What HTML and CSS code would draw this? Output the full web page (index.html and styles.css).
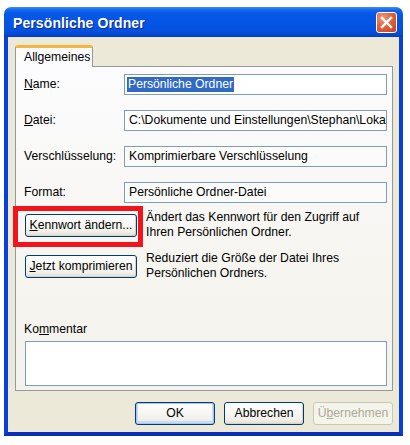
FILE: index.html
```html
<!DOCTYPE html>
<html lang="de">
<head>
<meta charset="utf-8">
<title>Persönliche Ordner</title>
<link rel="stylesheet" href="styles.css">
</head>
<body>
<div class="window">
  <div class="titlebar">
    <span class="title">Persönliche Ordner</span>
    <span class="close" aria-label="Schließen">
      <svg width="13" height="13" viewBox="0 0 13 13"><path d="M2 2 L11 11 M11 2 L2 11" stroke="#fff" stroke-width="2.4" stroke-linecap="square"/></svg>
    </span>
  </div>
  <div class="client">
    <div class="tabs">
      <div class="tab">Allgemeines</div>
    </div>
    <div class="panel">
      <div class="fields">
        <div class="row">
          <label class="label"><u>N</u>ame:</label>
          <div class="edit"><span class="sel">Persönliche Ordner</span></div>
        </div>
        <div class="row">
          <label class="label"><u>D</u>atei:</label>
          <div class="edit">C:\Dokumente und Einstellungen\Stephan\Loka</div>
        </div>
        <div class="row">
          <label class="label">Verschlüsselung:</label>
          <div class="edit ro">Komprimierbare Verschlüsselung</div>
        </div>
        <div class="row">
          <label class="label">Format:</label>
          <div class="edit ro">Persönliche Ordner-Datei</div>
        </div>
      </div>
      <div class="action first">
        <div class="btnwrap">
          <button class="btn wide"><u>K</u>ennwort ändern...</button>
          <span class="marker"></span>
        </div>
        <p class="desc">Ändert das Kennwort für den Zugriff auf<br>Ihren Persönlichen Ordner.</p>
      </div>
      <div class="action">
        <div class="btnwrap">
          <button class="btn wide"><u>J</u>etzt komprimieren</button>
        </div>
        <p class="desc">Reduziert die Größe der Datei Ihres<br>Persönlichen Ordners.</p>
      </div>
      <div class="comment">
        <label class="label">Ko<u>m</u>mentar</label>
        <div class="memo"></div>
      </div>
    </div>
    <div class="footer">
      <button class="btn default">OK</button>
      <button class="btn">Abbrechen</button>
      <button class="btn disabled">Ü<u>b</u>ernehmen</button>
    </div>
  </div>
</div>
</body>
</html>
```

FILE: styles.css
```css
* { box-sizing: border-box; }

html, body {
  margin: 0;
  padding: 0;
  background: #ffffff;
}

body {
  font-family: "Liberation Sans", Arial, sans-serif;
  font-size: 12.2px;
  color: #000;
}

.window {
  margin: 7px 0 0 4px;
  width: 399px;
  height: 429px;
  display: flex;
  flex-direction: column;
  border-radius: 7px 7px 0 0;
  overflow: hidden;
}

.titlebar {
  height: 30px;
  flex: none;
  display: flex;
  align-items: center;
  justify-content: space-between;
  padding: 0 6px 0 9px;
  background: linear-gradient(to bottom,
    #3f8ff6 0%, #1466ea 10%, #0758e6 22%, #0554e3 55%, #0551df 80%, #0645cf 94%, #0638bd 100%);
}

.title {
  color: #fff;
  font-weight: bold;
  font-size: 14px;
  letter-spacing: 0.1px;
  text-shadow: 1px 1px 0 #0a2a8a;
  padding-top: 1px;
}

.close {
  width: 21px;
  height: 21px;
  border: 1px solid #fff;
  border-radius: 3px;
  background: radial-gradient(circle at 30% 25%, #f0977a 0%, #e2643d 45%, #c93e1c 100%);
  display: flex;
  align-items: center;
  justify-content: center;
  margin-top: 1px;
}

.client {
  flex: 1;
  display: flex;
  flex-direction: column;
  background: #ece9d8;
  border: 4px solid #0b40d6;
  border-top: none;
  border-bottom-color: #0a2fb6;
  padding: 8px 6px 7px 7px;
}

.tabs {
  display: flex;
  height: 22px;
  margin-bottom: -1px;
  position: relative;
  z-index: 1;
}

.tab {
  width: 78px;
  height: 22px;
  background: #fcfcfe;
  border: 1px solid #919b9c;
  border-top: 3px solid #f4b53c;
  border-bottom: none;
  border-radius: 3px 3px 0 0;
  padding: 2px 0 0 8px;
  line-height: 15px;
}

.panel {
  flex: 1;
  border: 1px solid #919b9c;
  background: linear-gradient(to bottom, #fcfcfe 0%, #f6f5f0 60%, #f3f2ec 100%);
  padding: 7px 5px 4px 8px;
  display: flex;
  flex-direction: column;
}

.fields {
  display: flex;
  flex-direction: column;
  gap: 15px;
}

.row {
  display: grid;
  grid-template-columns: 100px 1fr;
  align-items: center;
  height: 21px;
}

.label {
  line-height: 15px;
  white-space: nowrap;
}

.edit {
  height: 21px;
  border: 1px solid #7f9db9;
  background: #fff;
  padding: 2px 0 0 4px;
  line-height: 15px;
  white-space: nowrap;
  overflow: hidden;
}

.edit.ro {
  background: #fbfbf9;
}

.sel {
  background: #316ac5;
  color: #fff;
  margin-left: -2px;
  padding: 0 1px;
  display: inline-block;
  line-height: 15px;
}

.action {
  display: flex;
  align-items: flex-start;
  margin-top: 15px;
}

.action.first {
  margin-top: 11px;
}

.btnwrap {
  position: relative;
  margin-left: 1px;
}

.marker {
  position: absolute;
  left: -12px;
  top: -8px;
  width: 130px;
  height: 41px;
  border: 5px solid #f2131b;
  pointer-events: none;
}

.btn {
  font-family: "Liberation Sans", Arial, sans-serif;
  font-size: 12.2px;
  color: #000;
  height: 23px;
  width: 80px;
  padding: 0;
  border: 1px solid #003c74;
  border-radius: 3px;
  background: linear-gradient(to bottom, #ffffff 0%, #f8f8f5 40%, #f0efe8 80%, #e0ddd2 100%);
  box-shadow: inset -1px -1px 0 #d8d2c4;
  line-height: 19px;
  text-align: center;
}

.btn.wide {
  width: 112px;
}

.btn.default {
  box-shadow: inset 0 0 0 1px #a8c4f0, inset 0 -1px 0 2px #c9dbf6;
}

.btn.disabled {
  color: #aca899;
  border-color: #c9c7ba;
  background: #f5f4ea;
  box-shadow: none;
}

.desc {
  margin: -4px 0 0 9px;
  line-height: 15px;
}

.comment {
  margin-top: auto;
  display: flex;
  flex-direction: column;
}

.comment .label {
  margin-bottom: 4px;
}

.memo {
  height: 45px;
  margin-left: 1px;
  border: 1px solid #7f9db9;
  background: #fff;
}

.footer {
  display: flex;
  justify-content: flex-end;
  gap: 9px;
  margin-top: 11px;
}

.footer .btn {
  width: 80px;
}
```
